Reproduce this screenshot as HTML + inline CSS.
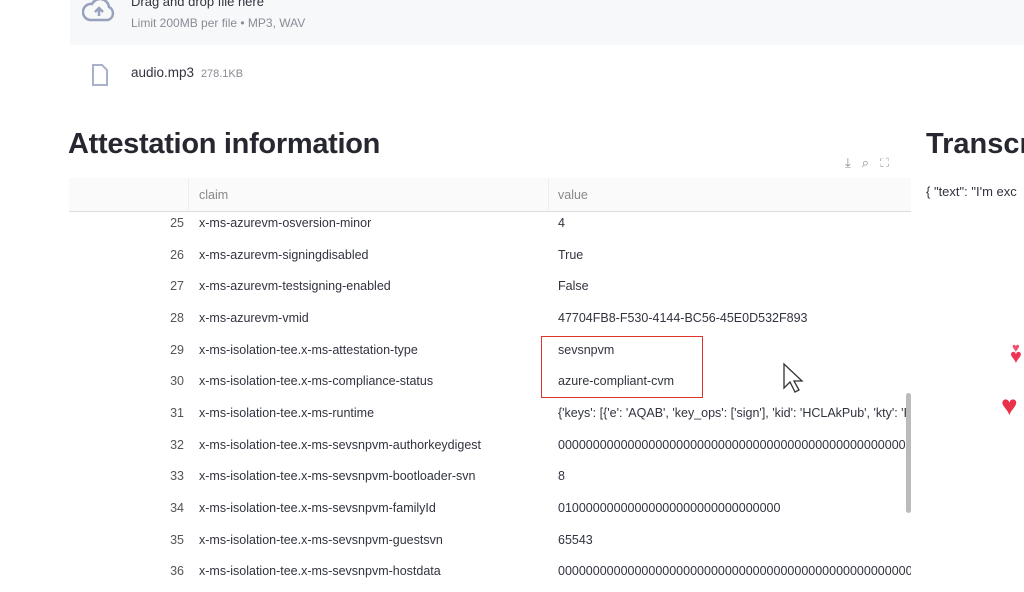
<!DOCTYPE html><html><head><style>
body{margin:0;width:1024px;height:575px;overflow:hidden;background:#fff;font-family:"Liberation Sans",sans-serif;position:relative;color:#31333f}
.a{position:absolute;white-space:nowrap}
.row{position:absolute;left:69px;width:842px;height:31.7px;font-size:12.5px;color:#31333f}
.row span{position:absolute;top:4px;white-space:nowrap}
.i{right:727px;color:#555;text-align:right}
.c{left:130px}.v{left:489px}
</style></head><body>
<div class="a" style="left:70px;top:0;width:954px;height:45px;background:#f7f8fa"></div>
<svg class="a" style="left:82px;top:0" width="36" height="26" viewBox="0 0 36 26"><path d="M8 20 H26 A7 7 0 0 0 27 7 A9 9 0 0 0 10 4 A8 8 0 0 0 8 20Z" fill="none" stroke="#97a0bd" stroke-width="2.5"/><path d="M17 16 V9 M13 12 L17 8 L21 12" stroke="#97a0bd" stroke-width="2.5" fill="none"/></svg>
<div class="a" style="left:131px;top:-6px;font-size:13px;color:#31333f">Drag and drop file here</div>
<div class="a" style="left:131px;top:16px;font-size:12px;color:#8a8c95">Limit 200MB per file • MP3, WAV</div>
<svg class="a" style="left:91px;top:63px" width="18" height="24"><path d="M2 2 H11 L16 7 V22 H2 Z" fill="none" stroke="#a8b1cc" stroke-width="2"/></svg>
<div class="a" style="left:131px;top:65px;font-size:13.5px">audio.mp3 <span style="font-size:11px;color:#8a8c95">&nbsp;278.1KB</span></div>
<div class="a" style="left:68px;top:128px;font-size:29px;font-weight:bold;color:#262730;letter-spacing:-0.3px">Attestation information</div>
<div class="a" style="left:926px;top:128px;font-size:29px;font-weight:bold;color:#262730">Transcr</div>
<div class="a" style="left:926px;top:184px;font-size:13px">{ "text": "I'm exc</div>
<div class="a" style="left:845px;top:155px;font-size:13px;color:#888;letter-spacing:11px">⤓⌕⛶</div>
<div class="a" style="left:69px;top:178px;width:842px;height:33px;background:#fafafa;border-bottom:1px solid #dcdcdc"></div>
<div class="a" style="left:188px;top:178px;width:1px;height:33px;background:#eee"></div>
<div class="a" style="left:548px;top:178px;width:1px;height:33px;background:#eee"></div>
<div class="a" style="left:199px;top:188px;font-size:12.5px;color:#888">claim</div>
<div class="a" style="left:558px;top:188px;font-size:12.5px;color:#888">value</div>
<div class="row" style="top:212px"><span class="i">25</span><span class="c">x-ms-azurevm-osversion-minor</span><span class="v">4</span></div>
<div class="row" style="top:244px"><span class="i">26</span><span class="c">x-ms-azurevm-signingdisabled</span><span class="v">True</span></div>
<div class="row" style="top:275px"><span class="i">27</span><span class="c">x-ms-azurevm-testsigning-enabled</span><span class="v">False</span></div>
<div class="row" style="top:307px"><span class="i">28</span><span class="c">x-ms-azurevm-vmid</span><span class="v">47704FB8-F530-4144-BC56-45E0D532F893</span></div>
<div class="row" style="top:339px"><span class="i">29</span><span class="c">x-ms-isolation-tee.x-ms-attestation-type</span><span class="v">sevsnpvm</span></div>
<div class="row" style="top:370px"><span class="i">30</span><span class="c">x-ms-isolation-tee.x-ms-compliance-status</span><span class="v">azure-compliant-cvm</span></div>
<div class="row" style="top:402px;overflow:hidden"><span class="i">31</span><span class="c">x-ms-isolation-tee.x-ms-runtime</span><span class="v">{'keys': [{'e': 'AQAB', 'key_ops': ['sign'], 'kid': 'HCLAkPub', 'kty': 'RSA',</span></div>
<div class="row" style="top:434px;overflow:hidden"><span class="i">32</span><span class="c">x-ms-isolation-tee.x-ms-sevsnpvm-authorkeydigest</span><span class="v">0000000000000000000000000000000000000000000000000000000000</span></div>
<div class="row" style="top:465px"><span class="i">33</span><span class="c">x-ms-isolation-tee.x-ms-sevsnpvm-bootloader-svn</span><span class="v">8</span></div>
<div class="row" style="top:497px"><span class="i">34</span><span class="c">x-ms-isolation-tee.x-ms-sevsnpvm-familyId</span><span class="v">01000000000000000000000000000000</span></div>
<div class="row" style="top:529px"><span class="i">35</span><span class="c">x-ms-isolation-tee.x-ms-sevsnpvm-guestsvn</span><span class="v">65543</span></div>
<div class="row" style="top:560px;overflow:hidden"><span class="i">36</span><span class="c">x-ms-isolation-tee.x-ms-sevsnpvm-hostdata</span><span class="v">0000000000000000000000000000000000000000000000000000000000</span></div>
<div class="a" style="left:541px;top:336px;width:160px;height:60px;border:1.5px solid #e0332c"></div>
<div class="a" style="left:906px;top:393px;width:5px;height:120px;background:#bbb;border-radius:3px"></div>
<svg class="a" style="left:782px;top:362px" width="24" height="32"><path d="M2 2 V26 L8 20 L13 30 L17 28 L12 19 H20 Z" fill="#fff" stroke="#333" stroke-width="1.3"/></svg>
<div class="a" style="left:1012px;top:340px;font-size:13px;color:#f05070">♥</div>
<div class="a" style="left:1010px;top:346px;font-size:20px;color:#ee3355">♥</div>
<div class="a" style="left:1001px;top:390px;font-size:28px;color:#e8324a">♥</div>
</body></html>
